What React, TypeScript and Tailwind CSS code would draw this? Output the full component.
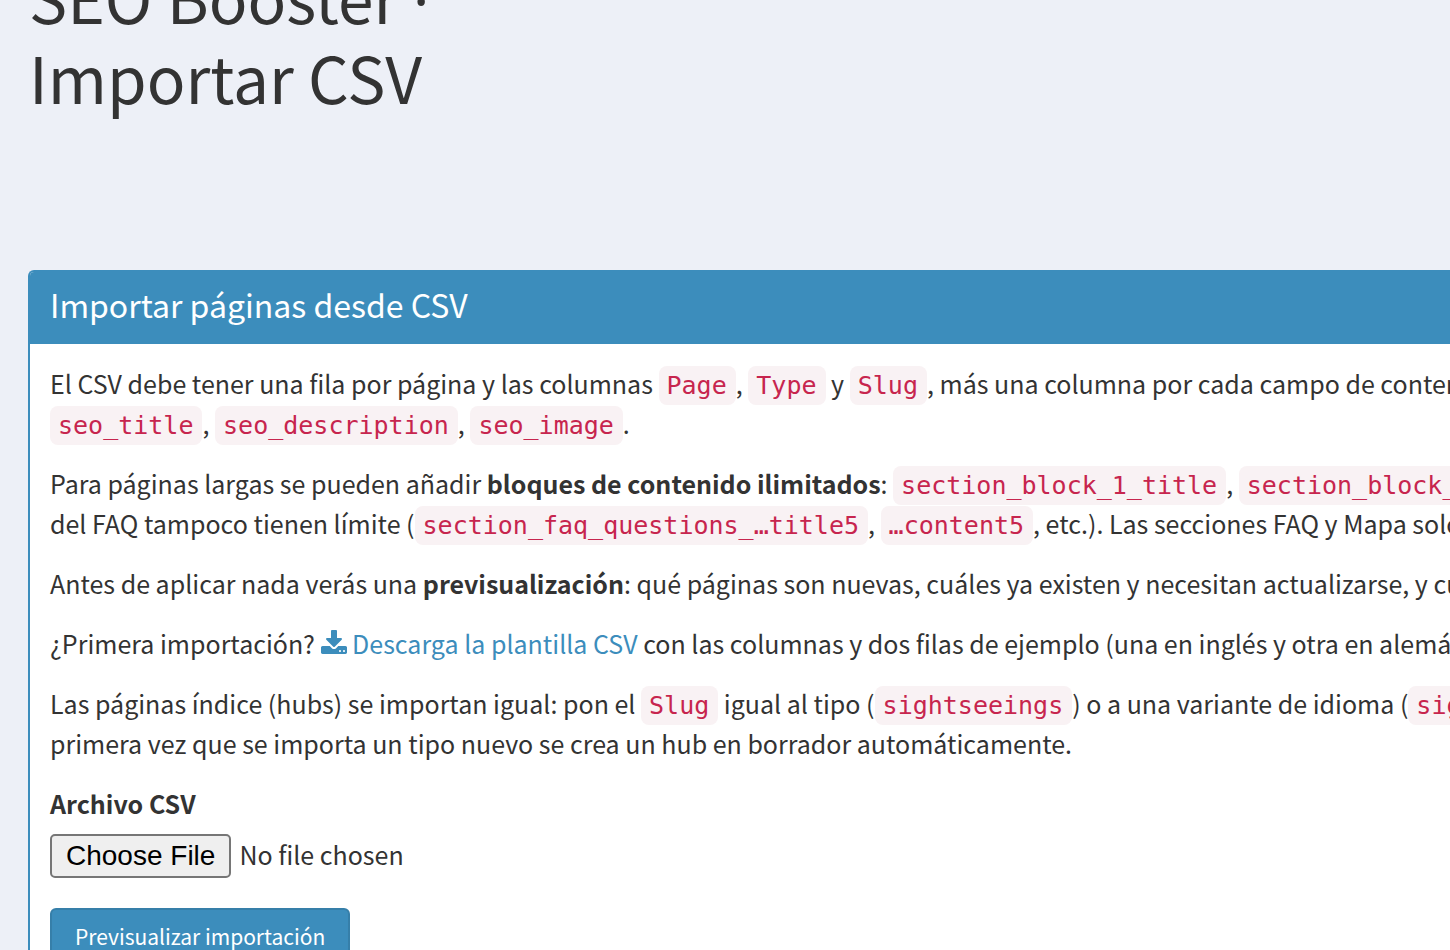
import React, { useState } from "react";

interface CodeProps {
  children: React.ReactNode;
}

const Code: React.FC<CodeProps> = ({ children }) => (
  <code className="rounded-lg bg-[#f9f2f4] py-[5px] pr-[9px] pl-2 font-['DejaVu_Sans_Mono',monospace] text-[25px] leading-none text-[#c7254e]">
    {children}
  </code>
);

const DownloadIcon: React.FC = () => (
  <svg
    viewBox="64 0 1664 1536"
    className="inline-block h-6 w-[26px] align-baseline"
    fill="currentColor"
    aria-hidden="true"
  >
    <path
      fillRule="evenodd"
      d="M1344 1344q0-26-19-45t-45-19-45 19-19 45 19 45 45 19 45-19 19-45zm256 0q0-26-19-45t-45-19-45 19-19 45 19 45 45 19 45-19 19-45zm128-224v320q0 40-28 68t-68 28h-1472q-40 0-68-28t-28-68v-320q0-40 28-68t68-28h465l135 136q58 56 136 56t136-56l136-136h464q40 0 68 28t28 68zm-325-569q17 41-14 70l-448 448q-18 19-45 19t-45-19l-448-448q-31-29-14-70 17-39 59-39h256v-448q0-26 19-45t45-19h256q26 0 45 19t19 45v448h256q42 0 59 39z"
    />
  </svg>
);

const ImportForm: React.FC = () => {
  const [file, setFile] = useState<File | null>(null);

  const handleSubmit = (e: React.FormEvent) => {
    e.preventDefault();
    if (!file) return;
  };

  return (
    <form onSubmit={handleSubmit} className="flex flex-col items-start">
      <label htmlFor="csv" className="mb-[11px] font-bold">
        Archivo CSV
      </label>
      <input
        id="csv"
        type="file"
        accept=".csv"
        onChange={(e) => setFile(e.target.files?.[0] ?? null)}
        className="mb-[30px] w-full leading-10 file:mr-2 file:h-11 file:rounded-[5px] file:border-2 file:border-solid file:border-[#767676] file:bg-[#efefef] file:px-[14px] file:font-['Liberation_Sans',sans-serif] file:text-[28px] file:leading-none file:text-black"
      />
      <button
        type="submit"
        className="rounded-md border-2 border-[#367fa9] bg-[#3c8dbc] px-[23px] pt-2 pb-3 text-[21px] leading-9 text-white"
      >
        Previsualizar importación
      </button>
    </form>
  );
};

const App: React.FC = () => {
  return (
    <div className="h-screen overflow-hidden bg-[#edf0f7] font-['Noto_Sans_CJK_SC',sans-serif] text-[#333]">
      <h1 className="-mt-11 pl-[29px] text-[64px] leading-[80px]">
        SEO Booster{" "}
        <span className="font-['Open_Sans',sans-serif] leading-none">·</span>
        <br />
        Importar CSV
      </h1>

      <section className="mt-[154px] ml-7 overflow-hidden rounded-tl-md border-t-2 border-l-2 border-[#3c8dbc] bg-white whitespace-nowrap">
        <header className="bg-[#3c8dbc] px-5 pt-3 pb-5 text-white">
          <h3 className="text-[32px] leading-10">Importar páginas desde CSV</h3>
        </header>

        <div className="flex flex-col gap-5 px-5 pt-[19px] pb-5 text-[25px] leading-10">
          <p>
            El CSV debe tener una fila por página y las columnas{" "}
            <Code>Page</Code>, <Code>Type</Code> y <Code>Slug</Code>, más una
            columna por cada campo de contenido:
            <br />
            <Code>seo_title</Code>, <Code>seo_description</Code>,{" "}
            <Code>seo_image</Code>.
          </p>
          <p>
            Para páginas largas se pueden añadir{" "}
            <strong>bloques de contenido ilimitados</strong>:{" "}
            <Code>section_block_1_title</Code>, <Code>section_block_1</Code>
            <br />
            del FAQ tampoco tienen límite (
            <Code>section_faq_questions_…title5</Code>, <Code>…content5</Code>,
            etc.). Las secciones FAQ y Mapa solo
          </p>
          <p>
            Antes de aplicar nada verás una <strong>previsualización</strong>:
            qué páginas son nuevas, cuáles ya existen y necesitan actualizarse,
            y cuáles
          </p>
          <p>
            ¿Primera importación?{" "}
            <a href="#plantilla" className="text-[#3c8dbc]">
              <DownloadIcon /> Descarga la plantilla CSV
            </a>{" "}
            con las columnas y dos filas de ejemplo (una en inglés y otra en
            alemán)
          </p>
          <p>
            Las páginas índice (hubs) se importan igual: pon el{" "}
            <Code>Slug</Code> igual al tipo (<Code>sightseeings</Code>) o a una
            variante de idioma (<Code>sightseeings</Code>
            <br />
            primera vez que se importa un tipo nuevo se crea un hub en borrador
            automáticamente.
          </p>
          <ImportForm />
        </div>
      </section>
    </div>
  );
};

export default App;
